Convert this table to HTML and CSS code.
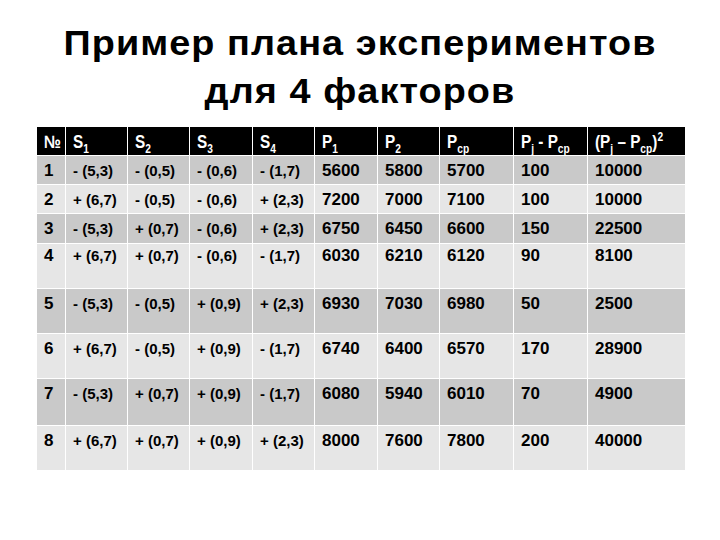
FILE: index.html
```html
<!DOCTYPE html>
<html lang="ru">
<head>
<meta charset="utf-8">
<link rel="stylesheet" href="styles.css">
</head>
<body>
<div class="slide">
  <h1 class="title">Пример плана экспериментов<br>для 4 факторов</h1>
  <table class="plan">
    <colgroup>
      <col class="c-n"><col class="c-s"><col class="c-s"><col class="c-s3"><col class="c-s"><col class="c-s3"><col class="c-s"><col class="c-w"><col class="c-w"><col class="c-last">
    </colgroup>
    <thead>
      <tr>
        <th><span class="hd">№</span></th>
        <th><span class="hd">S<sub>1</sub></span></th>
        <th><span class="hd">S<sub>2</sub></span></th>
        <th><span class="hd">S<sub>3</sub></span></th>
        <th><span class="hd">S<sub>4</sub></span></th>
        <th><span class="hd">P<sub>1</sub></span></th>
        <th><span class="hd">P<sub>2</sub></span></th>
        <th><span class="hd">P<sub>ср</sub></span></th>
        <th><span class="hd">P<sub>j</sub> - P<sub>ср</sub></span></th>
        <th><span class="hd">(P<sub>j</sub> – P<sub>ср</sub>)<sup>2</sup></span></th>
      </tr>
    </thead>
    <tbody>
      <tr class="r-dark r-short"><td>1</td><td class="s">- (5,3)</td><td class="s">- (0,5)</td><td class="s">- (0,6)</td><td class="s">- (1,7)</td><td>5600</td><td>5800</td><td>5700</td><td>100</td><td>10000</td></tr>
      <tr class="r-light r-short"><td>2</td><td class="s">+ (6,7)</td><td class="s">- (0,5)</td><td class="s">- (0,6)</td><td class="s">+ (2,3)</td><td>7200</td><td>7000</td><td>7100</td><td>100</td><td>10000</td></tr>
      <tr class="r-dark r-short3"><td>3</td><td class="s">- (5,3)</td><td class="s">+ (0,7)</td><td class="s">- (0,6)</td><td class="s">+ (2,3)</td><td>6750</td><td>6450</td><td>6600</td><td>150</td><td>22500</td></tr>
      <tr class="r-light r-tall r-high"><td>4</td><td class="s">+ (6,7)</td><td class="s">+ (0,7)</td><td class="s">- (0,6)</td><td class="s">- (1,7)</td><td>6030</td><td>6210</td><td>6120</td><td>90</td><td>8100</td></tr>
      <tr class="r-dark r-tall"><td>5</td><td class="s">- (5,3)</td><td class="s">- (0,5)</td><td class="s">+ (0,9)</td><td class="s">+ (2,3)</td><td>6930</td><td>7030</td><td>6980</td><td>50</td><td>2500</td></tr>
      <tr class="r-light r-tall"><td>6</td><td class="s">+ (6,7)</td><td class="s">- (0,5)</td><td class="s">+ (0,9)</td><td class="s">- (1,7)</td><td>6740</td><td>6400</td><td>6570</td><td>170</td><td>28900</td></tr>
      <tr class="r-dark r-tall7"><td>7</td><td class="s">- (5,3)</td><td class="s">+ (0,7)</td><td class="s">+ (0,9)</td><td class="s">- (1,7)</td><td>6080</td><td>5940</td><td>6010</td><td>70</td><td>4900</td></tr>
      <tr class="r-light r-tall"><td>8</td><td class="s">+ (6,7)</td><td class="s">+ (0,7)</td><td class="s">+ (0,9)</td><td class="s">+ (2,3)</td><td>8000</td><td>7600</td><td>7800</td><td>200</td><td>40000</td></tr>
    </tbody>
  </table>
</div>
</body>
</html>
```

FILE: styles.css
```css
html, body {
  margin: 0;
  padding: 0;
  background: #ffffff;
}

.slide {
  width: 720px;
  height: 540px;
  padding-top: 19px;
  box-sizing: border-box;
  font-family: "Liberation Sans", Arial, sans-serif;
  color: #000;
}

.title {
  margin: 0 0 12px 0;
  font-size: 35px;
  line-height: 48px;
  letter-spacing: 1px;
  font-weight: bold;
  text-align: center;
  transform: scaleX(1.08);
  transform-origin: center;
}

.plan {
  margin-left: 36px;
  width: 648px;
  table-layout: fixed;
  border-collapse: collapse;
}

.c-n { width: 29px; }
.c-s { width: 62px; }
.c-s3 { width: 63px; }
.c-w { width: 74px; }
.c-last { width: 98px; }

.plan th,
.plan td {
  border: 1px solid #ffffff;
  padding: 0 0 0 7px;
  text-align: left;
  vertical-align: top;
  white-space: nowrap;
  overflow: hidden;
  font-weight: bold;
}

.plan th {
  background: #000000;
  color: #ffffff;
  height: 28px;
  box-sizing: border-box;
  border-top: none;
  font-size: 18px;
  line-height: 18px;
  padding-top: 6px;
}

.hd {
  display: inline-block;
  transform: scaleX(0.85);
  transform-origin: left center;
}

.plan sub {
  font-size: 12px;
  vertical-align: -5px;
  line-height: 0;
}

.plan sup {
  font-size: 12px;
  vertical-align: 7px;
  line-height: 0;
}

.plan td {
  font-size: 17px;
  line-height: 20px;
  padding-top: 5px;
  box-sizing: border-box;
}

.plan td.s {
  font-size: 15px;
}

.r-dark td { background: #c9c9c9; }
.r-light td { background: #e6e6e6; }

.r-short td { height: 29px; }
.r-short3 td { height: 30px; }
.r-tall td { height: 45px; }
.r-tall7 td { height: 47px; }
.r-high td { padding-top: 2px; }
```
